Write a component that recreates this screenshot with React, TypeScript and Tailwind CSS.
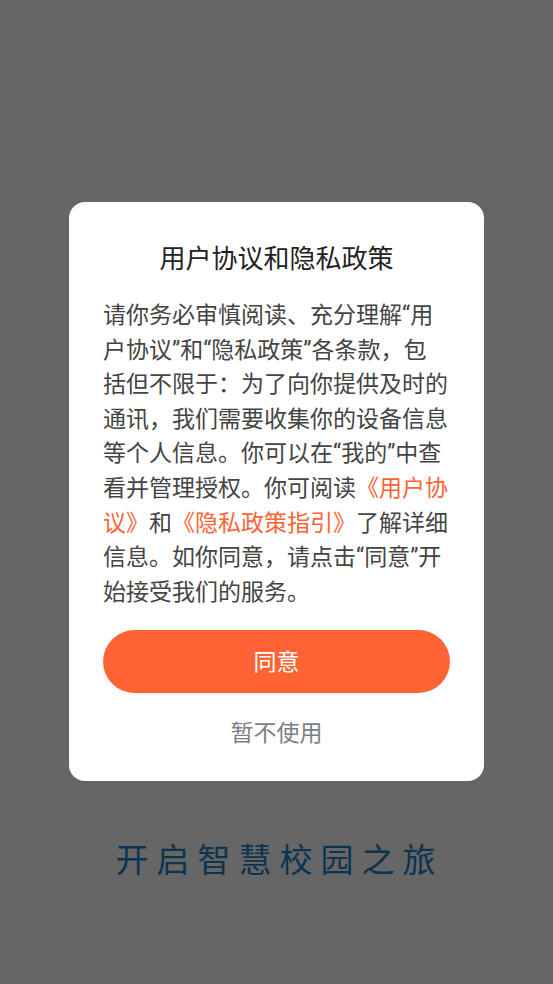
const FONT = "font-['Roboto','Noto_Sans_CJK_SC',sans-serif]"

export default function App() {
  return (
    <div className={`flex h-[984px] w-full flex-col items-center bg-[#666666] pt-[202px] ${FONT}`}>
      <div className="flex h-[579px] w-[415px] flex-col rounded-[16px] bg-white px-[34px]">
        <h1 className="mt-[38px] text-center text-[26px] leading-[38px] font-normal text-[#222222]">
          用户协议和隐私政策
        </h1>
        <p className="mt-[21px] w-[345px] text-[23px] leading-[34.6px] text-[#444444]">
          请你务必审慎阅读、充分理解“用户协议”和“隐私政策”各条款，包括但不限于：为了向你提供及时的通讯，我们需要收集你的设备信息等个人信息。你可以在“我的”中查看并管理授权。你可阅读
          <span className="text-[#ff6333]">《用户协议》</span>
          和
          <span className="text-[#ff6333]">《隐私政策指引》</span>
          了解详细信息。如你同意，请点击“同意”开始接受我们的服务。
        </p>
        <button className="mt-[20px] h-[63px] w-full rounded-full bg-[#ff6333] pt-[2px] text-[23px] text-white">
          同意
        </button>
        <button className="mt-[24px] h-[34px] w-full text-[23px] text-[#7b8087]">暂不使用</button>
      </div>
      <div className="mt-[58px] pl-[6px] text-[33px] leading-[44px] tracking-[8px] text-[#0c3450]">开启智慧校园之旅</div>
    </div>
  )
}
